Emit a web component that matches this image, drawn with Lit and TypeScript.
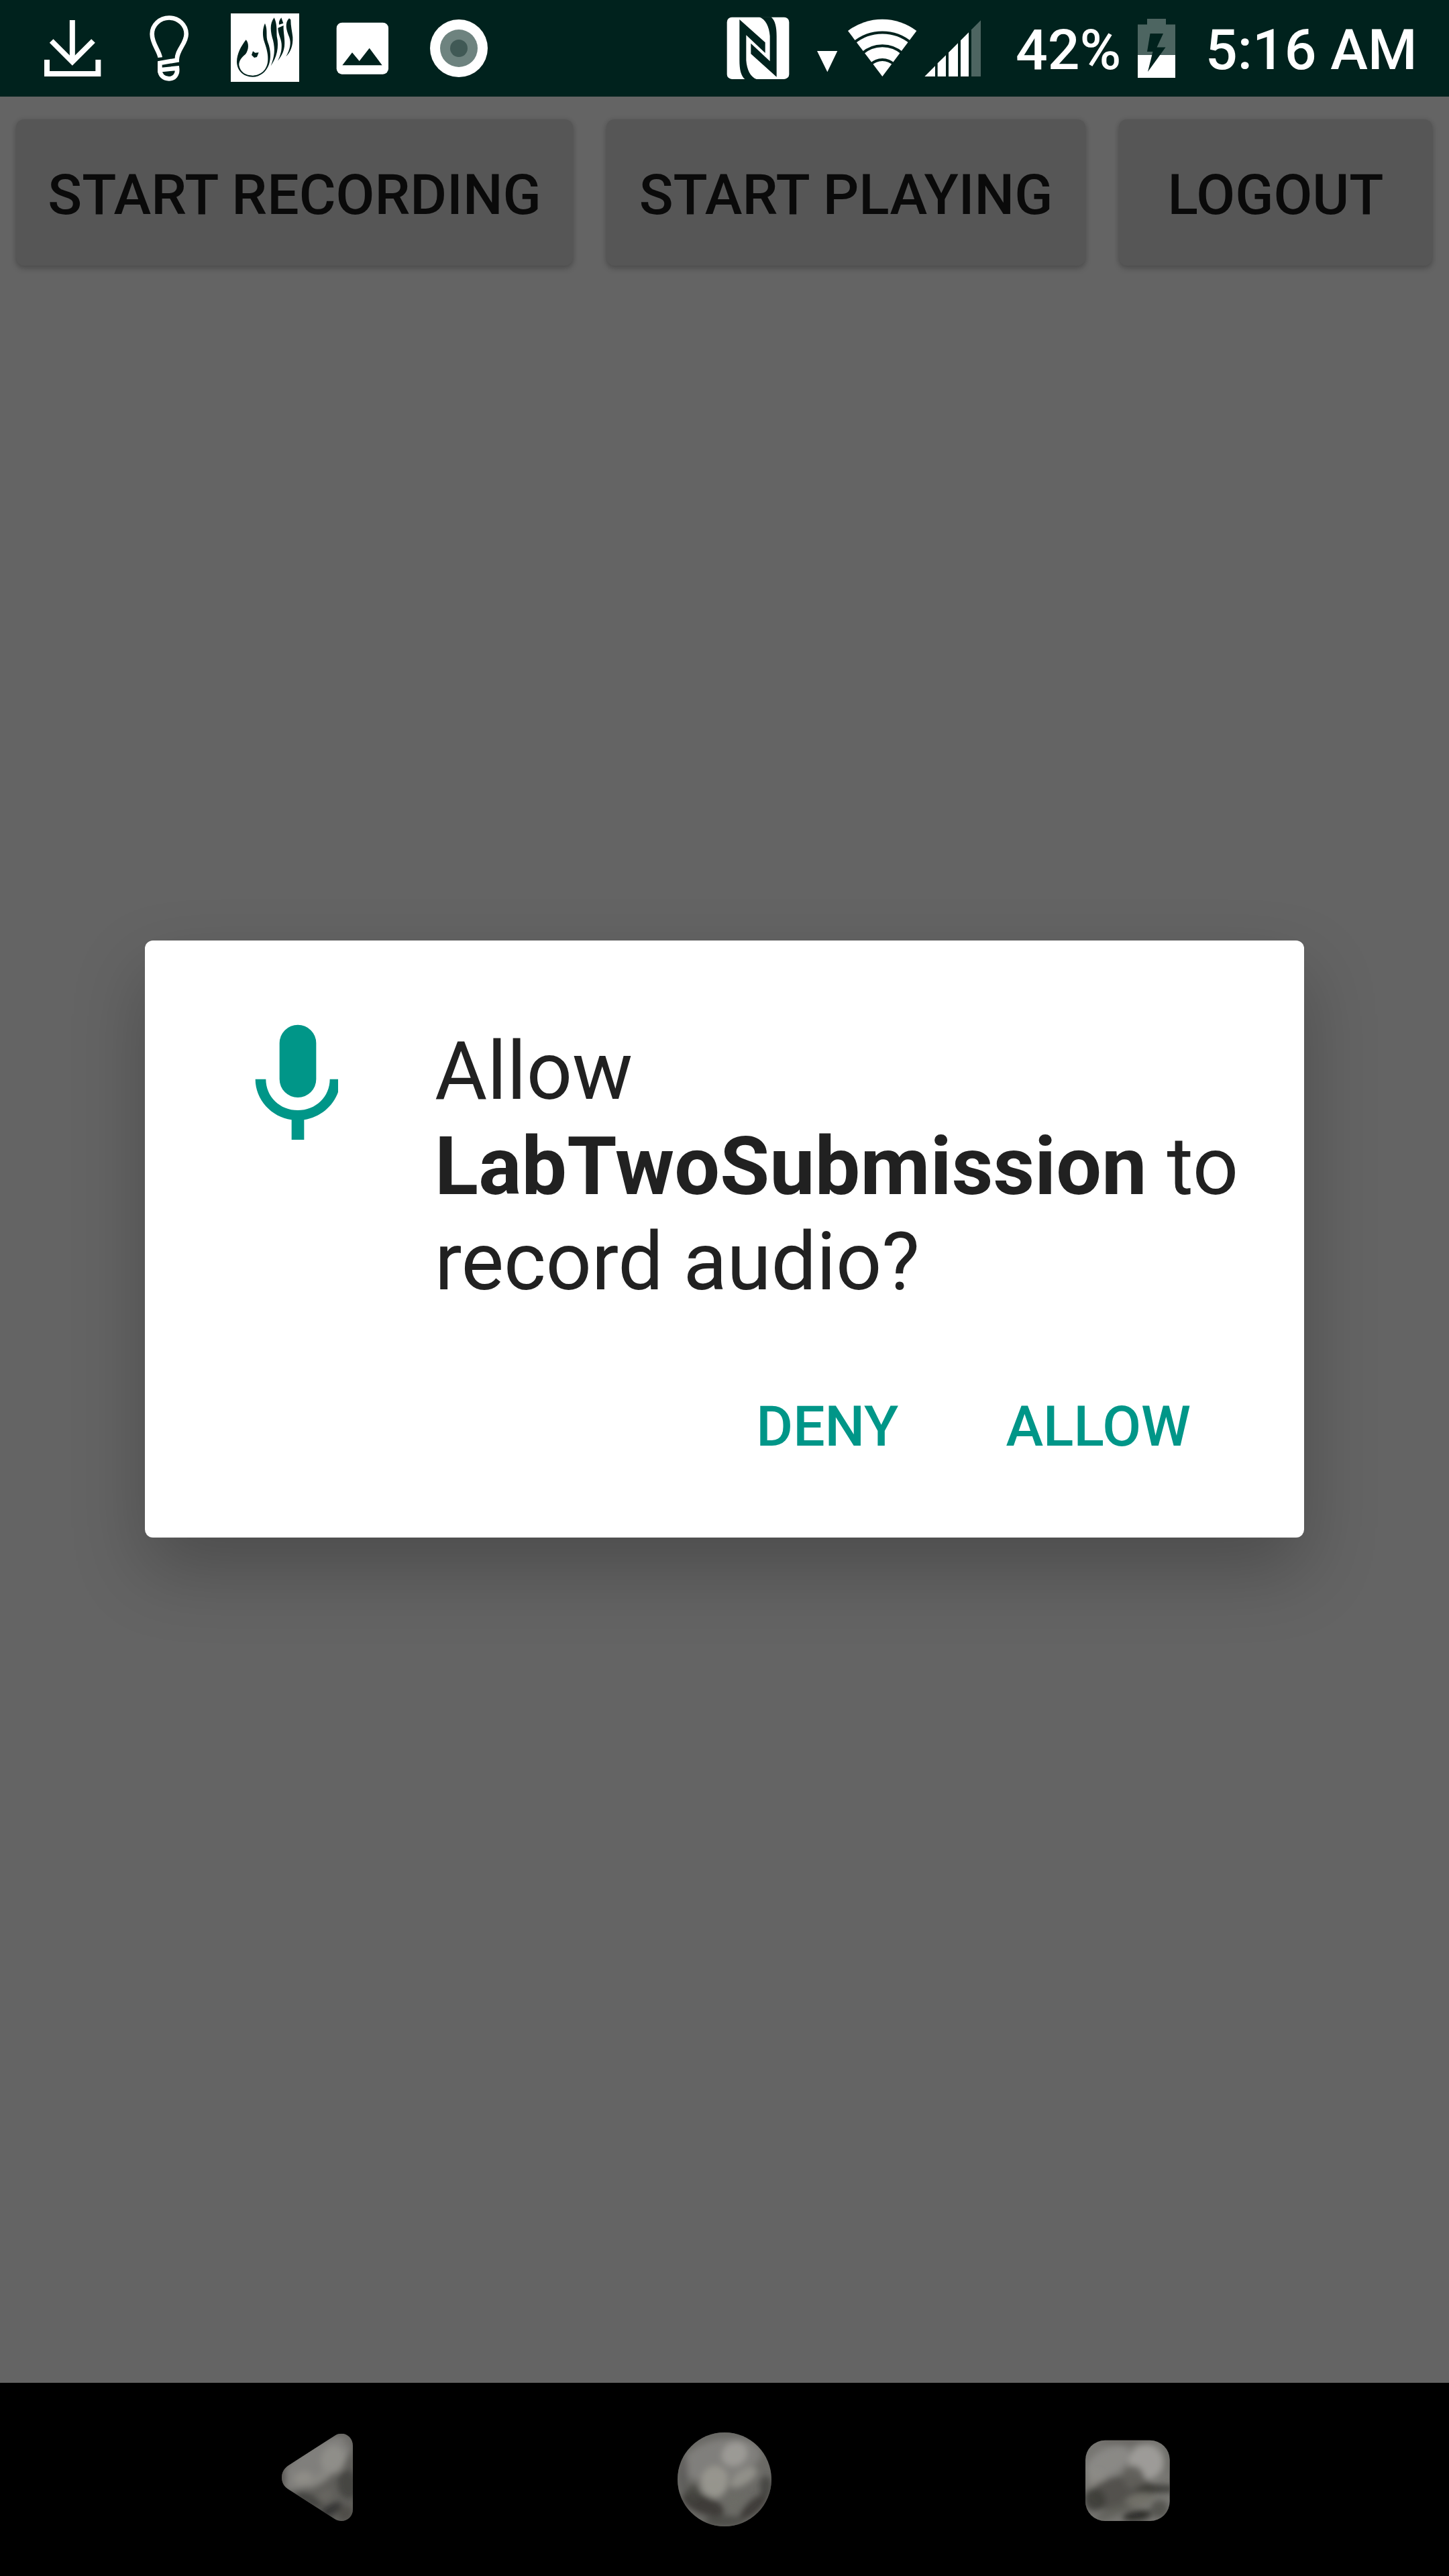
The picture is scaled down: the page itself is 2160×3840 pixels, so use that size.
import { LitElement, html, css, svg } from "lit";
import { customElement, property } from "lit/decorators.js";

@customElement("status-bar")
class StatusBar extends LitElement {
  static styles = css`
    :host { display: flex; justify-content: space-between; height: 144px; background: #00221d; color: #fff; }
    .group { display: flex; align-items: center; height: 144px; }
    .left { padding-left: 36px; }
    .left svg { width: 144px; }
    svg { display: block; height: 144px; flex: none; }
    .text { padding-top: 5px; font: 500 84px/139px Roboto, "Liberation Sans", sans-serif; white-space: nowrap; }
    .percent { width: 178px; margin-left: 48px; }
    .clock { width: 363px; margin-left: 41px; }
  `;

  render() {
    return html`
      <div class="group left">
        <svg viewBox="108 0 432 432" aria-label="Download">
          <g fill="none" stroke="#fff" stroke-width="24">
            <path d="M323.500 90V270" /><path d="M230 183L323.500 276L417 183" />
            <path d="M210 267V330H439V267" />
          </g>
        </svg>
        <svg viewBox="540 0 432 432" aria-label="Tip">
          <path fill="none" stroke="#fff" stroke-width="20"
            d="M716 257C712 226 680 196 680 152A76 72 0 0 1 833 152C833 196 790 222 791 269L715 282V313L792 305C796 335 778 352 756 352C731 352 715 336 715 313" />
        </svg>
        <svg viewBox="972 0 432 432" aria-label="Prayer">
          <rect x="1032" y="60" width="306" height="306" fill="#fff" />
          <g fill="#00221d">
            <path d="M1100 178C1114 192 1113 224 1098 242C1078 258 1068 273 1069 292C1075 324 1100 338 1131 338C1174 335 1198 305 1198 264C1199 235 1188 205 1182 187C1173 160 1174 126 1185 104C1199 137 1187 158 1198 190C1211 222 1213 262 1202 290C1190 322 1162 344 1130 344C1086 343 1060 315 1059 276C1060 240 1077 208 1100 178Z" />
            <path d="M1131 229L1141 236L1157 235L1149 255L1137 258L1125 246Z" />
            <path d="M1226 79C1204 107 1210 144 1221 180C1231 222 1228 252 1211 295C1238 257 1249 210 1238 163C1236 133 1240 108 1226 79Z" />
            <path d="M1258 79C1249 90 1246 99 1248 110L1267 104Z" />
            <path d="M1243 125L1268 114C1266 144 1276 176 1272 207C1268 235 1258 252 1242 272C1255 247 1261 224 1259 196C1257 170 1244 154 1243 125Z" />
            <path d="M1293 82C1272 103 1280 134 1294 167C1303 194 1297 221 1279 253C1299 234 1311 205 1309 166C1306 139 1300 117 1300 88Z" />
          </g>
        </svg>
        <svg viewBox="1404 0 432 432" aria-label="Picture">
          <rect x="1505" y="101" width="232" height="231" rx="25" fill="#fff" />
          <path d="M1531 292L1575 235L1607 273L1652 215L1709 292Z" fill="#00221d" />
        </svg>
        <svg viewBox="1836 0 432 432" aria-label="Recorder">
          <circle cx="2052" cy="216" r="129" fill="#fff" />
          <circle cx="2052" cy="216" r="84" fill="#6e837f" />
          <circle cx="2052" cy="216" r="39" fill="#405955" />
        </svg>
      </div>
      <div class="group">
        <svg width="426" viewBox="0 0 1278 432" aria-label="NFC, Wi-Fi and mobile signal">
          <rect x="131" y="77" width="278" height="277" rx="22" fill="#fff" />
          <g fill="#00221d">
            <path d="M187 87L302 190V237L217 157V270C220 310 235 345 265 355H212C193 339 187 310 187 270Z" />
            <path d="M187 87L302 190V237L217 157V270C220 310 235 345 265 355H212C193 339 187 310 187 270Z" transform="rotate(180 270 215.500)" />
          </g>
          <path d="M534 228H625L580 322Z" fill="#fff" />
          <path d="M826 342L672 138A254 254 0 0 1 979 138Z" fill="#fff" />
          <g fill="none" stroke="#00221d" stroke-width="12">
            <path d="M697 193A200 200 0 0 1 955 193" />
            <path d="M735 239A137 137 0 0 1 917 239" />
            <path d="M774 288A74 74 0 0 1 878 288" />
          </g>
          <path d="M1015 342L1062 295V342ZM1073 283L1110 247V342H1073ZM1122 235L1164 193V342H1122ZM1176 181L1212 145V342H1176Z" fill="#fff" />
          <path d="M1224 133L1266 91V342H1224Z" fill="#4d6561" />
        </svg>
        <span class="text percent">42%</span>
        <svg width="64" viewBox="1692 0 64 144" aria-label="Charging">
          <path d="M1710 28H1738V36.500H1752V82.500H1696V36.500H1710Z" fill="#4d6561" />
          <path d="M1696 82H1752V116H1696Z" fill="#fff" />
          <path d="M1714.500 50H1734L1724.500 70.500H1737.500L1711 107L1718.500 77H1710Z" fill="#00221d" />
        </svg>
        <span class="text clock">5:16 AM</span>
      </div>
    `;
  }
}

@customElement("action-button")
class ActionButton extends LitElement {
  @property() label = "";
  static styles = css`
    :host { display: block; }
    .button {
      display: block; box-sizing: border-box; width: 100%; height: 218px; padding: 8px 0 0; border: 0; border-radius: 12px;
      background: #565656; color: #0a0a0a; font: 500 84px/210px Roboto, "Liberation Sans", sans-serif;
      white-space: nowrap; text-align: center;
      box-shadow: 0 5px 9px rgba(0, 0, 0, 0.18), 0 0 7px rgba(0, 0, 0, 0.12);
    }
  `;
  render() {
    return html`<button class="button">${this.label}</button>`;
  }
}

@customElement("permission-dialog")
class PermissionDialog extends LitElement {
  static styles = css`
    :host {
      display: flex; flex-direction: column; box-sizing: border-box; width: 1728px; height: 890px;
      padding: 120px 72px 72px 144px; border-radius: 12px; background: #fff;
      box-shadow: 0 48px 110px rgba(0, 0, 0, 0.24);
      font-family: Roboto, "Liberation Sans", sans-serif;
    }
    .body { display: flex; gap: 144px; }
    .icon { flex: none; width: 144px; height: 180px; }
    .message { margin: 0; padding-top: 4px; font-size: 120px; line-height: 142px; color: #212121; white-space: nowrap; }
    .message strong { font-weight: 700; letter-spacing: 0.22px; }
    .last { letter-spacing: -0.15px; }
    .actions { display: flex; justify-content: flex-end; gap: 64px; margin-top: 67px; padding-right: 49px; }
    .action {
      height: 216px; padding: 0 48px; border: 0; background: none; color: #009688;
      font: 500 84px/216px Roboto, "Liberation Sans", sans-serif;
    }
  `;
  render() {
    return html`
      <div class="body">
        <svg class="icon" viewBox="540 456 432 540" aria-label="Microphone">
          <g fill="#009688">
            <rect x="710" y="473" width="164" height="325" rx="82" />
            <path d="M602 716H649C649 795 712 855 792 855S935 795 935 716H982C982 808 910 885 820 898V987H764V898C674 885 602 808 602 716Z" />
          </g>
        </svg>
        <p class="message">Allow<br /><strong>LabTwoSubmission</strong> to<br /><span class="last">record audio?</span></p>
      </div>
      <div class="actions">
        <button class="action">DENY</button>
        <button class="action">ALLOW</button>
      </div>
    `;
  }
}

/* Stone texture patch: centre, radii, rotation, colour, opacity. */
type Patch = [number, number, number, number, number, string, number];

const patches = (list: Patch[]) => list.map(([x, y, rx, ry, a, c, o]) => svg`
  <ellipse cx=${x} cy=${y} rx=${rx} ry=${ry} transform="rotate(${a} ${x} ${y})" fill=${c} opacity=${o}></ellipse>`);

@customElement("navigation-bar")
class NavigationBar extends LitElement {
  static styles = css`
    :host { display: flex; align-items: center; justify-content: center; gap: 400px; height: 288px; background: #000; }
    svg { display: block; flex: none; width: 200px; height: 288px; }
  `;
  render() {
    return html`
      <svg viewBox="0 96 600 864" aria-label="Back">
        <defs>
          <clipPath id="back-shape"><path d="M150 466L360 331C396 310 438 336 438 378V662C438 704 394 727 358 706L150 572C110 547 110 492 150 466Z" /></clipPath>
          <filter id="back-soft" x="-50%" y="-50%" width="200%" height="200%"><feGaussianBlur stdDeviation="14" /></filter>
        </defs>
        <g clip-path="url(#back-shape)">
          <rect x="100" y="300" width="360" height="430" fill="#5f5e5a" />
          <g filter="url(#back-soft)">
            ${patches([
              [275, 455, 185, 80, -34, "#807f7b", 1],
              [350, 440, 55, 65, 10, "#94938e", 0.75],
              [215, 522, 42, 30, -10, "#92918b", 0.8],
              [290, 525, 70, 24, -34, "#8a8984", 0.7],
              [418, 350, 22, 40, -20, "#6d6c69", 0.8],
              [415, 550, 45, 65, -10, "#3e3e3b", 0.75],
              [240, 618, 70, 22, 25, "#40403d", 0.9],
              [340, 664, 55, 24, -30, "#30302d", 0.85],
              [315, 600, 36, 24, -30, "#696862", 0.8],
              [405, 680, 32, 34, 0, "#4c4b47", 0.9],
              [125, 520, 12, 48, 0, "#4c4b48", 0.9],
            ])}
          </g>
        </g>
      </svg>
      <svg viewBox="0 96 600 864" aria-label="Home">
        <defs>
          <clipPath id="home-shape"><circle cx="300" cy="528" r="210" /></clipPath>
          <filter id="home-soft" x="-50%" y="-50%" width="200%" height="200%"><feGaussianBlur stdDeviation="14" /></filter>
        </defs>
        <g clip-path="url(#home-shape)">
          <rect x="80" y="300" width="440" height="450" fill="#6b6a66" />
          <g filter="url(#home-soft)">
            ${patches([
              [285, 440, 180, 90, -12, "#807f7b", 1],
              [345, 415, 60, 52, -30, "#a09f9a", 0.85],
              [255, 540, 62, 72, 10, "#98978f", 0.95],
              [385, 520, 70, 30, -32, "#95948d", 0.9],
              [300, 330, 150, 16, 0, "#666562", 0.8],
              [115, 500, 22, 90, 0, "#5b5a58", 0.8],
              [205, 640, 100, 42, 22, "#3b3a37", 0.95],
              [160, 590, 32, 40, 0, "#454440", 0.8],
              [430, 650, 80, 28, -42, "#3b3a37", 0.95],
              [485, 560, 28, 48, 0, "#3f3e3c", 0.8],
              [345, 630, 48, 36, -40, "#6c6b65", 0.9],
              [300, 715, 90, 26, 0, "#4b4a46", 0.9],
            ])}
          </g>
        </g>
      </svg>
      <svg viewBox="0 96 600 864" aria-label="Recents">
        <defs>
          <clipPath id="recents-shape"><rect x="114" y="353" width="377" height="361" rx="88" /></clipPath>
          <filter id="recents-soft" x="-50%" y="-50%" width="200%" height="200%"><feGaussianBlur stdDeviation="14" /></filter>
        </defs>
        <g clip-path="url(#recents-shape)">
          <rect x="100" y="340" width="410" height="390" fill="#777672" />
          <g filter="url(#recents-soft)">
            ${patches([
              [215, 450, 105, 58, -28, "#8c8b87", 0.9],
              [385, 450, 78, 78, 35, "#a1a09b", 0.9],
              [165, 525, 38, 45, -35, "#8d8c87", 0.8],
              [300, 360, 130, 14, 0, "#64635f", 0.8],
              [480, 430, 16, 70, 0, "#6b6a66", 0.8],
              [275, 590, 150, 75, -8, "#52514d", 1],
              [330, 520, 48, 55, -25, "#5f5e5a", 0.9],
              [155, 620, 50, 50, 0, "#3d3c38", 0.85],
              [430, 570, 95, 18, 0, "#383733", 0.9],
              [355, 620, 68, 28, -12, "#74736c", 0.9],
              [240, 672, 85, 24, -25, "#5f5e58", 0.8],
              [345, 690, 66, 24, -8, "#2b2a27", 0.95],
              [445, 660, 40, 40, 0, "#4e4d48", 0.8],
            ])}
          </g>
        </g>
      </svg>
    `;
  }
}

@customElement("app-root")
class AppRoot extends LitElement {
  static styles = css`
    :host { display: flex; flex-direction: column; position: relative; width: 2160px; height: 3840px; background: #646464; overflow: hidden; }
    .content { flex: 1; }
    .toolbar { display: grid; grid-template-columns: 830px 714px 467px; gap: 50px; padding: 34px 24px 0; }
    .dialog { position: absolute; left: 216px; top: 1402px; }
  `;
  render() {
    return html`
      <status-bar></status-bar>
      <main class="content">
        <div class="toolbar">
          <action-button label="START RECORDING"></action-button>
          <action-button label="START PLAYING"></action-button>
          <action-button label="LOGOUT"></action-button>
        </div>
      </main>
      <navigation-bar></navigation-bar>
      <permission-dialog class="dialog"></permission-dialog>
    `;
  }
}
